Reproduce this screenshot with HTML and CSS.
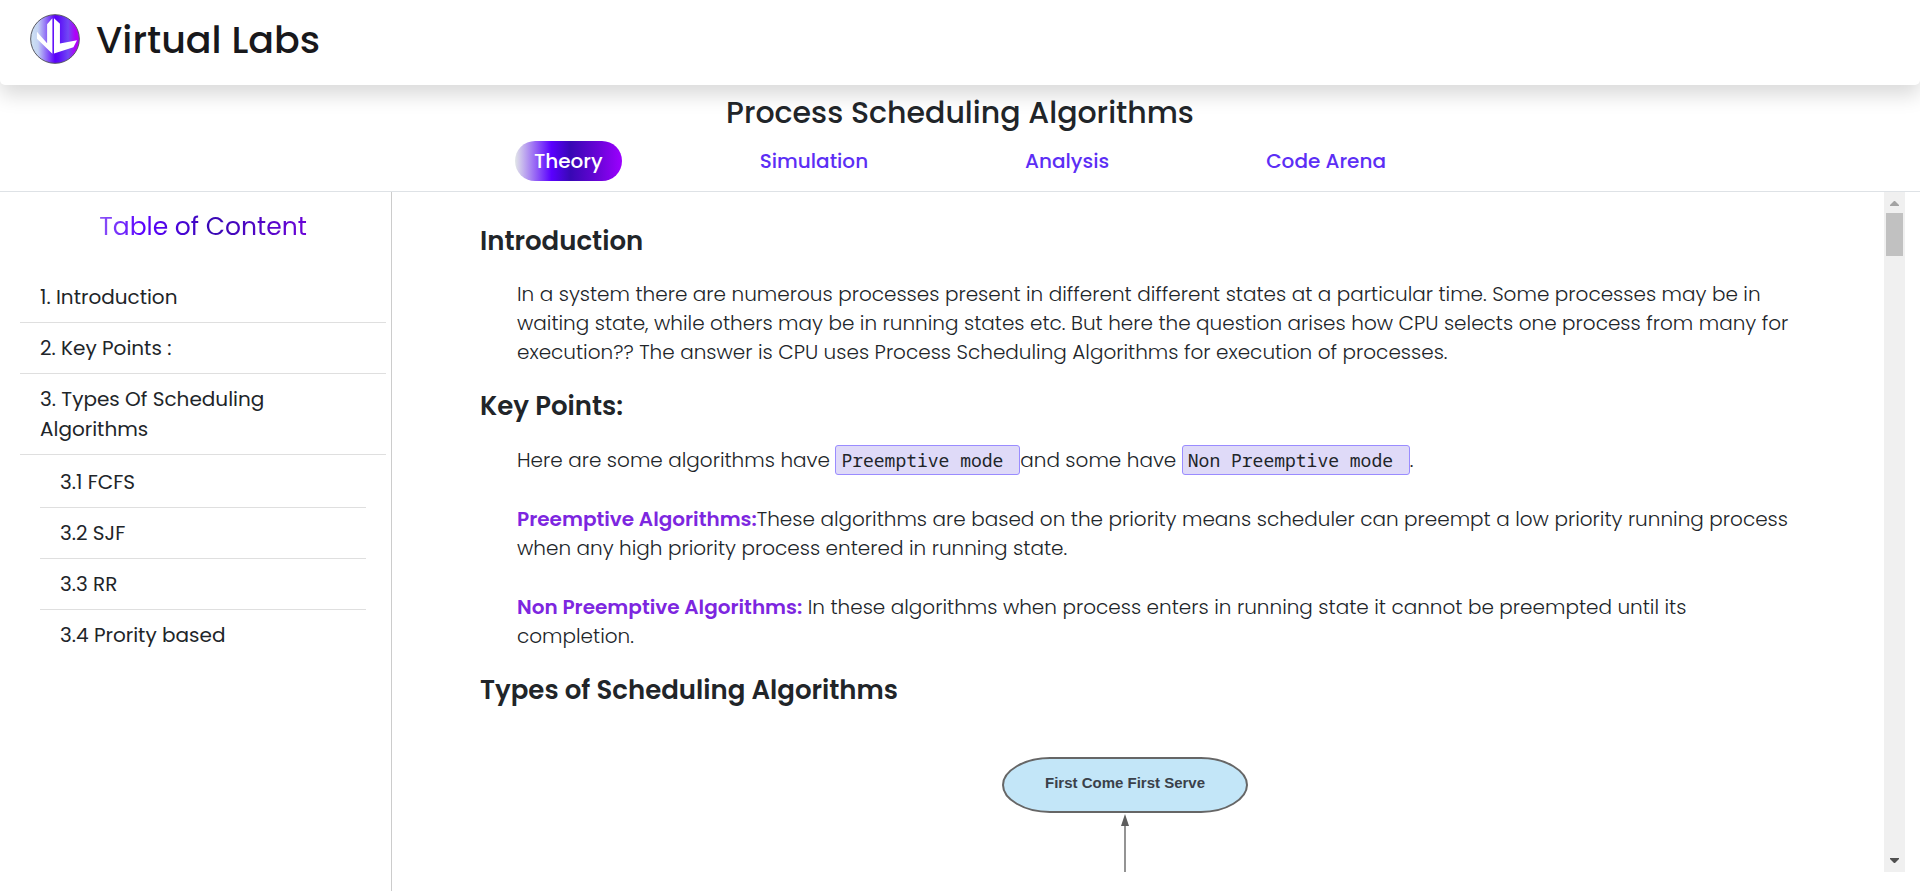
FILE: index.html
```html
<!DOCTYPE html>
<html lang="en">
<head>
<meta charset="utf-8">
<meta name="viewport" content="width=device-width, initial-scale=1">
<title>Virtual Labs</title>
<link rel="stylesheet" href="styles.css">
</head>
<body>
<header class="site-header">
  <svg class="logo" viewBox="31 17 152 152" aria-hidden="true">
    <defs>
      <linearGradient id="logo-fill" x1="0" x2="1" y1="0" y2="0">
        <stop offset="0" stop-color="#cfe3f3"/>
        <stop offset=".15" stop-color="#c3d2f3"/>
        <stop offset=".5" stop-color="#5a00fa"/>
        <stop offset=".57" stop-color="#5c0cf8"/>
        <stop offset=".77" stop-color="#7048f4"/>
        <stop offset=".92" stop-color="#b000f8"/>
        <stop offset="1" stop-color="#b000f8"/>
      </linearGradient>
    </defs>
    <circle cx="107" cy="93" r="74" fill="url(#logo-fill)" stroke="#55555f" stroke-width="3"/>
    <path d="M52 71 83 106V48L99 30V138L52 92ZM104 30 122 47V107L174 97 163 118 104 137Z" fill="#fff"/>
  </svg>
  <span class="brand">Virtual Labs</span>
</header>

<section class="experiment">
  <h1 class="experiment-title">Process Scheduling Algorithms</h1>
  <nav class="tabs">
    <a class="tab tab-active" href="#theory">Theory</a>
    <a class="tab" href="#simulation">Simulation</a>
    <a class="tab" href="#analysis">Analysis</a>
    <a class="tab" href="#code">Code Arena</a>
  </nav>
</section>

<div class="workspace">
  <aside class="sidebar">
    <h2 class="toc-title">Table of Content</h2>
    <ul class="toc">
      <li class="toc-item"><a href="#introduction">1. Introduction</a></li>
      <li class="toc-item"><a href="#key-points">2. Key Points :</a></li>
      <li class="toc-item"><a href="#types">3. Types Of Scheduling<br>Algorithms</a></li>
    </ul>
    <ul class="toc toc-sub">
      <li class="toc-item"><a href="#fcfs">3.1 FCFS</a></li>
      <li class="toc-item"><a href="#sjf">3.2 SJF</a></li>
      <li class="toc-item"><a href="#rr">3.3 RR</a></li>
      <li class="toc-item"><a href="#priority">3.4 Prority based</a></li>
    </ul>
  </aside>

  <div class="reader">
    <main class="content" id="theory">
      <h3 class="heading" id="introduction">Introduction</h3>
      <div class="prose">
        <p>In a system there are numerous processes present in different different states at a particular time. Some processes may be in waiting state, while others may be in running states etc. But here the question arises how CPU selects one process from many for execution?? The answer is CPU uses Process Scheduling Algorithms for execution of processes.</p>
      </div>
      <h3 class="heading" id="key-points">Key Points:</h3>
      <div class="prose">
        <p>Here are some algorithms have <code class="mode">Preemptive mode </code>and some have <code class="mode">Non Preemptive mode </code>.</p>
        <p><strong class="term">Preemptive Algorithms:</strong>These algorithms are based on the priority means scheduler can preempt a low priority running process when any high priority process entered in running state.</p>
        <p><strong class="term">Non Preemptive Algorithms:</strong> In these algorithms when process enters in running state it cannot be preempted until its completion.</p>
      </div>
      <h3 class="heading" id="types">Types of Scheduling Algorithms</h3>
      <div class="diagram">
        <svg width="246" height="180" viewBox="0 0 246 180" role="img" aria-label="First Come First Serve">
          <path d="M48 2H199C224 2 245 15 245 29C245 43 224 56 199 56H48C22 56 1 43 1 29C1 15 22 2 48 2Z" fill="#c3e6f8" stroke="#666" stroke-width="2"/>
          <path d="M123 68V180" stroke="#666" stroke-width="1.4"/>
          <path d="M123 58 127 70H119Z" fill="#5e5e5e"/>
          <text class="node-label" x="123" y="32" text-anchor="middle">First Come First Serve</text>
        </svg>
      </div>
    </main>
    <div class="scrollbar" aria-hidden="true">
      <svg class="arrow" viewBox="0 0 9 5"><path d="M4 0H5L9 4V5H0V4Z" fill="#a3a3a3"/></svg>
      <div class="thumb"></div>
      <svg class="arrow" viewBox="0 0 9 5"><path d="M4 5H5L9 1V0H0V1Z" fill="#505050"/></svg>
    </div>
  </div>
</div>
</body>
</html>
```

FILE: styles.css
```css
* {
  box-sizing: border-box;
}

body {
  margin: 0;
  height: 100vh;
  display: flex;
  flex-direction: column;
  overflow: hidden;
  background: #fff;
  color: #212529;
  font: 300 20px/30px Poppins, Inter, sans-serif;
}

h1, h2, h3, p, ul {
  margin: 0;
  padding: 0;
}

a {
  color: inherit;
  text-decoration: none;
}

.site-header {
  display: flex;
  align-items: center;
  gap: 16px;
  padding: 14px 30px 21px;
  border-radius: 0 0 5px 5px;
  box-shadow: 0 10px 20px rgba(0, 0, 0, 0.15);
}

.logo {
  width: 50px;
  height: 50px;
}

.brand {
  padding-top: 2px;
  color: #18181b;
  font-size: 38px;
  font-weight: 500;
  line-height: 48px;
}

.experiment {
  padding: 10px 0;
  border-bottom: 1px solid #dee2e6;
}

.experiment-title {
  margin-bottom: 10px;
  font-size: 30px;
  font-weight: 500;
  line-height: 36px;
  text-align: center;
}

.tabs {
  display: flex;
  justify-content: center;
  gap: 119px;
}

.tab {
  padding: 5px 19px;
  border-radius: 20px;
  color: #5c2ef5;
  font-weight: 500;
}

.tab-active {
  background: linear-gradient(90deg, #e2e6e8 0%, #5a00ff 34%, #3808b4 52%, #6a04d8 78%, #9c00ff 100%);
  color: #fff;
}

.workspace {
  flex: 1;
  min-height: 0;
  display: flex;
}

.sidebar {
  flex: none;
  width: 392px;
  padding: 20px 5px 0 20px;
  border-right: 1px solid #ccc;
}

.toc-title {
  margin-bottom: 30px;
  background: linear-gradient(90deg, #e2e6e8 0%, #5a00ff 34%, #3808b4 52%, #6a04d8 78%, #9c00ff 100%);
  -webkit-background-clip: text;
  background-clip: text;
  color: transparent;
  font-size: 25px;
  font-weight: 400;
  line-height: 30px;
  text-align: center;
}

.toc {
  list-style: none;
  font-weight: 400;
}

.toc-item {
  padding: 10px 20px;
  border-bottom: 1px solid #dfdfdf;
}

.toc-sub {
  padding: 2px 20px 0;
}

.toc-sub .toc-item:last-child {
  border-bottom: 0;
}

.reader {
  flex: 1;
  min-width: 0;
  display: flex;
  margin: 0 15px 19px 0;
}

.content {
  flex: 1;
  min-width: 0;
  padding: 34px 88px 0;
  overflow: hidden;
}

.heading {
  margin-bottom: 23px;
  font-size: 26px;
  font-weight: 600;
  line-height: 31px;
}

.prose {
  display: flex;
  flex-direction: column;
  gap: 30px;
  margin-bottom: 24px;
  padding-left: 37px;
  line-height: 29px;
}

.mode {
  display: inline-block;
  padding: 0 5px;
  border: 1px solid #9a8cff;
  border-radius: 3px;
  background: #dfdaf8;
  font: 400 18px/28px "Noto Sans Mono", "DejaVu Sans Mono", monospace;
  white-space: pre;
}

.term {
  color: #7d26e0;
  font-weight: 600;
}

.diagram {
  display: flex;
  justify-content: center;
  margin-top: 50px;
  padding-right: 27px;
}

.node-label {
  fill: #3a414a;
  font: 700 15px "Liberation Sans", Arial, sans-serif;
}

.scrollbar {
  flex: none;
  display: flex;
  flex-direction: column;
  align-items: center;
  width: 21px;
  padding: 9px 0;
  background: #f0f0f0;
}

.arrow {
  width: 9px;
  height: 5px;
}

.thumb {
  width: 17px;
  height: 43px;
  margin: 7px 0 auto;
  background: #c1c1c1;
}
```
